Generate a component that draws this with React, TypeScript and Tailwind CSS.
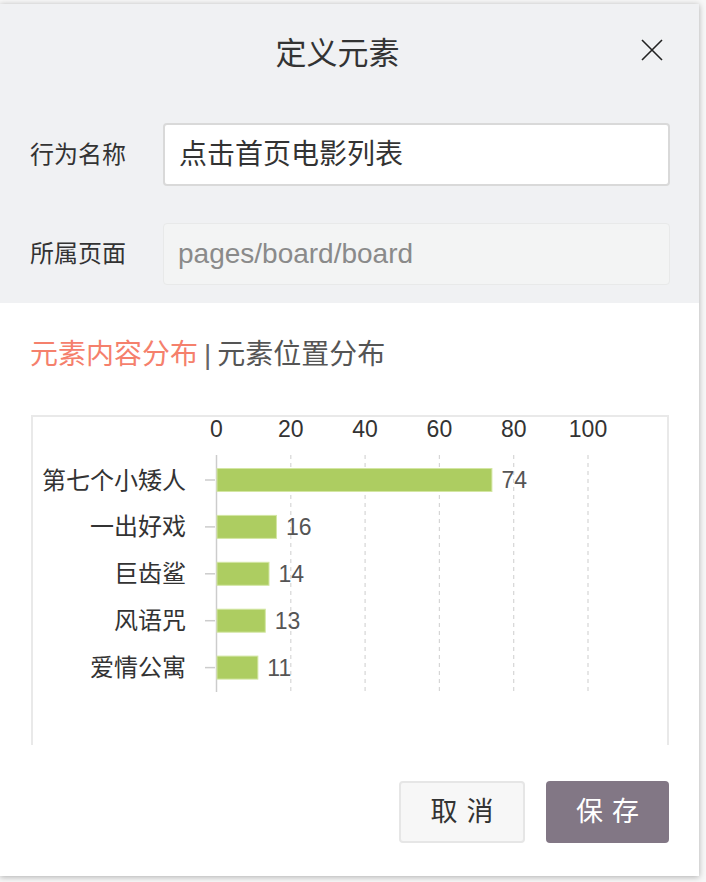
const items = [
  { name: '第七个小矮人', value: 74 },
  { name: '一出好戏', value: 16 },
  { name: '巨齿鲨', value: 14 },
  { name: '风语咒', value: 13 },
  { name: '爱情公寓', value: 11 },
]

const ticks = [0, 20, 40, 60, 80, 100]
const x0 = 216.5
const unit = 3.715
const rowTop = 480
const rowGap = 46.9

function BarChart() {
  return (
    <svg width={634} height={328} viewBox="33 417 634 328" className="block">
      {ticks.map((t) => (
        <text
          key={t}
          x={x0 + t * unit}
          y={437}
          textAnchor="middle"
          fontSize={23}
          fill="#333"
          fontFamily="'Liberation Sans', sans-serif"
        >
          {t}
        </text>
      ))}
      {ticks.slice(1).map((t) => (
        <line
          key={t}
          x1={x0 + t * unit}
          x2={x0 + t * unit}
          y1={455}
          y2={692}
          stroke="#d6d6d6"
          strokeWidth={1.2}
          strokeDasharray="4 4"
        />
      ))}
      <line x1={x0} x2={x0} y1={455} y2={692} stroke="#cccccc" strokeWidth={1.5} />
      {items.map((item, i) => {
        const cy = rowTop + i * rowGap
        const w = item.value * unit
        return (
          <g key={item.name}>
            <line x1={205} x2={215} y1={cy} y2={cy} stroke="#cccccc" strokeWidth={1.5} />
            <rect x={x0 + 0.5} y={cy - 11.5} width={w} height={23} fill="#adcd61" stroke="#d3e6a3" strokeWidth={1} />
            <text
              x={186}
              y={cy + 8.5}
              textAnchor="end"
              fontSize={24}
              fill="#333"
              fontFamily="'Noto Sans CJK SC', sans-serif"
            >
              {item.name}
            </text>
            <text
              x={x0 + w + 10}
              y={cy + 8}
              fontSize={23}
              fill="#555"
              fontFamily="'Liberation Sans', sans-serif"
            >
              {item.value}
            </text>
          </g>
        )
      })}
    </svg>
  )
}

export default function App() {
  return (
    <div
      className="w-[706px] h-[882px] bg-[#f7f7f7] overflow-hidden"
      style={{ fontFamily: "'Liberation Sans', 'Noto Sans CJK SC', sans-serif" }}
    >
      <div className="pt-[4px]">
        <div className="w-[699px] h-[872px] bg-white shadow-[0_1px_6px_rgba(0,0,0,0.3)] flex flex-col">
          {/* header */}
          <div className="bg-[#f0f1f3] h-[299px] flex flex-col">
            <div className="h-[100px] flex items-center">
              <span className="flex-1 pl-[34px] text-center text-[31px] leading-[40px] text-[#333]">定义元素</span>
              <button className="w-[22px] h-[22px] mr-[36px] mb-[8px] flex items-center justify-center">
                <svg width="22" height="22" viewBox="0 0 22 22">
                  <path d="M1 1 L21 21 M21 1 L1 21" stroke="#222" strokeWidth="1.6" fill="none" />
                </svg>
              </button>
            </div>
            <div className="flex items-center mt-[19px]">
              <span className="w-[163px] pl-[30px] text-[24px] leading-[32px] text-[#333]">行为名称</span>
              <div className="w-[507px] h-[63px] bg-white border-2 border-[#d9d9d9] rounded-[4px] flex items-center pl-[14px] text-[28px] text-[#333]">
                点击首页电影列表
              </div>
            </div>
            <div className="flex items-center mt-[37px]">
              <span className="w-[163px] pl-[30px] text-[24px] leading-[32px] text-[#333]">所属页面</span>
              <div className="w-[507px] h-[62px] bg-[#f3f4f4] border border-[#e8e9e9] rounded-[4px] flex items-center pl-[14px] text-[28px] text-[#8a8a8a]">
                pages/board/board
              </div>
            </div>
          </div>

          {/* tabs */}
          <div className="mt-[32px] px-[30px] text-[28px] leading-[40px] flex items-center">
            <span className="text-[#f5806c]">元素内容分布</span>
            <span className="text-[#666] mx-[6px]">|</span>
            <span className="text-[#555]">元素位置分布</span>
          </div>

          {/* chart */}
          <div className="mt-[40px] ml-[31px] w-[638px] h-[330px] border-t-2 border-x-2 border-[#e9e9e9]">
            <BarChart />
          </div>

          {/* footer */}
          <div className="mt-[36px] pr-[30px] flex justify-end gap-[21px]">
            <button className="w-[126px] h-[62px] bg-[#f7f7f7] border-2 border-[#e6e6e6] rounded-[4px] text-[27px] text-[#333] tracking-[9px] pl-[9px]">
              取消
            </button>
            <button className="w-[123px] h-[62px] bg-[#827785] rounded-[4px] text-[27px] text-white tracking-[9px] pl-[9px]">
              保存
            </button>
          </div>
        </div>
      </div>
    </div>
  )
}
